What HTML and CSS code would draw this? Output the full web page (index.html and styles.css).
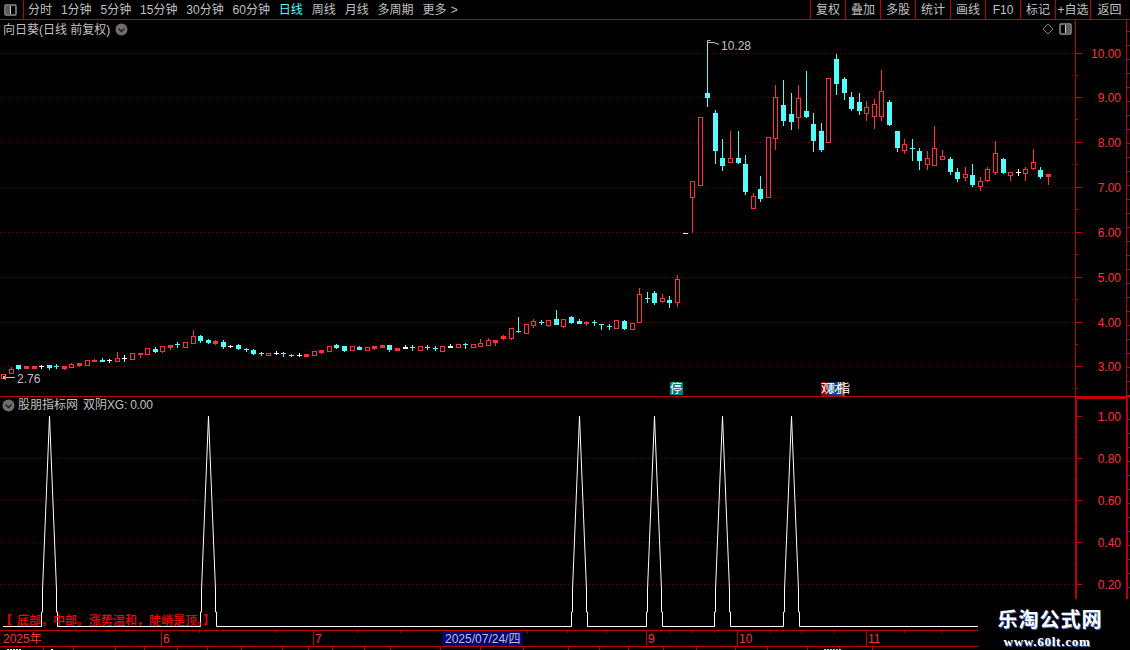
FILE: index.html
```html
<!DOCTYPE html>
<html lang="zh">
<head>
<meta charset="utf-8">
<title>向日葵 日线</title>
<link rel="stylesheet" href="styles.css">
</head>
<body>
<div class="app">
  <header class="toolbar">
    <div class="toggle">
      <svg class="panel-icon" width="13" height="12" viewBox="0 0 13 12"><rect x="1" y="1" width="11" height="10" rx="1" class="pi-frame"/><rect x="2" y="2" width="4" height="8" class="pi-fill"/><rect x="6" y="2" width="1" height="8" class="pi-div"/></svg>
    </div>
    <nav class="periods">
      <span>分时</span><span>1分钟</span><span>5分钟</span><span>15分钟</span><span>30分钟</span><span>60分钟</span><span class="active">日线</span><span>周线</span><span>月线</span><span>多周期</span><span>更多 <i class="more">&gt;</i></span>
    </nav>
    <nav class="actions">
      <span>复权</span><span>叠加</span><span>多股</span><span>统计</span><span>画线</span><span>F10</span><span>标记</span><span>+自选</span><span class="last">返回</span>
    </nav>
  </header>

  <section class="upper">
    <div class="panel-title">
      <span>向日葵(日线 前复权)</span>
      <svg class="chev" width="13" height="13" viewBox="0 0 13 13"><circle cx="6.5" cy="6.5" r="6" class="chev-bg"/><path d="M3.5 5.5 L6.5 8.5 L9.5 5.5" class="chev-mark"/></svg>
    </div>
    <div class="panel-tools">
      <svg width="12" height="12" viewBox="0 0 12 12"><path d="M6 1 L11 6 L6 11 L1 6 Z" class="diamond"/></svg>
      <svg width="13" height="12" viewBox="0 0 13 12"><rect x="1" y="1" width="11" height="10" rx="1" class="pi-frame"/><rect x="7" y="2" width="4" height="8" class="pi-fill"/><rect x="6" y="2" width="1" height="8" class="pi-div"/></svg>
    </div>
    <svg id="upper" class="chart" width="1130" height="376" viewBox="0 20 1130 376"></svg>
  </section>

  <section class="lower">
    <div class="panel-title lower-title">
      <svg class="chev" width="13" height="13" viewBox="0 0 13 13"><circle cx="6.5" cy="6.5" r="6" class="chev-bg"/><path d="M3.5 5.5 L6.5 8.5 L9.5 5.5" class="chev-mark"/></svg>
      <span class="t-name">股朋指标网</span><span class="t-ind">双阴</span><span class="t-val">XG: 0.00</span>
    </div>
    <svg id="lower" class="chart" width="1130" height="233" viewBox="0 397 1130 233"></svg>
    <div class="legend"><span class="lb">【</span>底部，中部。涨势温和，陡峭是顶。】</div>
  </section>

  <svg id="time" class="chart timebar" width="1130" height="16" viewBox="0 631 1130 16"></svg>
  <svg id="sliver" class="chart sliver" width="1130" height="3" viewBox="0 647 1130 3"></svg>

  <aside class="watermark">
    <div class="wm-cn">乐淘公式网</div>
    <div class="wm-url">www.60lt.com</div>
  </aside>
</div>
<script src="chart.js"></script>
</body>
</html>
```

FILE: styles.css
```css
* { box-sizing: border-box; }
html, body { margin: 0; padding: 0; background: #000; }
body { width: 1130px; height: 650px; overflow: hidden; }
.app {
  position: relative;
  width: 1130px;
  height: 650px;
  display: flex;
  flex-direction: column;
  overflow: hidden;
  background: #000;
  color: #c0c0c0;
  font: 12px/1 "Liberation Sans", "Noto Sans CJK SC", sans-serif;
}

/* toolbar */
.toolbar {
  display: flex;
  align-items: stretch;
  height: 20px;
  flex: none;
  border-bottom: 1px solid #c00000;
}
.toggle {
  width: 24px;
  display: flex;
  align-items: center;
  padding-left: 4px;
  border-right: 1px solid #c00000;
}
.panel-icon { display: block; }
.pi-frame { fill: #000; stroke: #909090; stroke-width: 1.5; }
.pi-fill { fill: #5c5c5c; }
.pi-div { fill: #c8c8c8; }
.periods {
  display: flex;
  align-items: center;
  gap: 8.9px;
  padding-left: 4px;
  white-space: nowrap;
}
.periods .active { color: #54fcfc; }
.more { font-style: normal; margin-left: 1px; }
.actions {
  display: flex;
  margin-left: auto;
  margin-right: 2px;
}
.actions span {
  width: 35px;
  display: flex;
  align-items: center;
  justify-content: center;
  border-left: 1px solid #c00000;
  white-space: nowrap;
}
.actions .last { width: 38px; }

/* panels */
.upper { position: relative; height: 377px; flex: none; border-bottom: 1px solid #c00000; }
.lower { position: relative; height: 234px; flex: none; border-bottom: 1px solid #c00000; }
.chart { display: block; }
.panel-title {
  position: absolute;
  left: 3px;
  top: 1px;
  height: 17px;
  display: flex;
  align-items: center;
  gap: 5px;
  white-space: nowrap;
}
.lower-title { top: 0; left: 2px; height: 16px; gap: 0; }
.t-name { margin-left: 3px; }
.t-ind { margin-left: 5px; }
.t-val { letter-spacing: -.2px; }
.chev { display: block; flex: none; }
.chev-bg { fill: #6e6e6e; }
.chev-mark { fill: none; stroke: #1c1c1c; stroke-width: 1.4; }
.panel-tools {
  position: absolute;
  left: 1042px;
  top: 3px;
  display: flex;
  align-items: center;
  gap: 5px;
}
.panel-tools svg { display: block; }
.diamond { fill: none; stroke: #808080; }
.legend {
  position: absolute;
  left: 0;
  top: 217px;
  color: #f80000;
  font-weight: 500;
  white-space: nowrap;
  line-height: 14px;
}
.lb { margin-right: 5px; }

/* svg parts */
.red { fill: #ff3232; }
.cyan { fill: #54fcfc; }
.white { fill: #fff; }
.line { fill: #c00000; }
.grid { fill: #800000; }
.axis-text { fill: #ff3232; font: 12px "Liberation Sans", "Noto Sans CJK SC", sans-serif; }
.end { text-anchor: end; }
.note { fill: #c0c0c0; font: 12px "Liberation Sans", sans-serif; }
.note-line { fill: none; stroke: #c0c0c0; stroke-width: 1; }
.peak { fill: none; stroke: #fff; stroke-width: 1; }
.sig { fill: #fff; font: 12px "Noto Sans CJK SC", sans-serif; }
.sig-teal { fill: #008080; }
.sig-red { fill: #900000; }
.sig-blue { fill: #004080; }
.sig-brown { fill: #a05000; }
.date-box { fill: #00007c; stroke: #0000c0; }
.date-text { fill: #c0c0c0; font: 12px "Liberation Sans", "Noto Sans CJK SC", sans-serif; }

/* watermark */
.watermark {
  position: absolute;
  left: 978px;
  top: 600px;
  width: 152px;
  height: 50px;
  background: #000;
  color: #fff;
  text-align: center;
  padding-top: 8px;
}
.wm-cn {
  font: 700 20px/22px "Noto Sans CJK SC", sans-serif;
  letter-spacing: 1px;
  margin-left: -8px;
  text-shadow: 1px 1px 0 #3a6ac8;
}
.wm-url {
  font: 700 13px/15px "Liberation Serif", serif;
  letter-spacing: .75px;
  margin-top: 4px;
  margin-left: -14px;
  text-shadow: 1px 1px 0 #3a6ac8;
}
```

FILE: chart.js
```js
// [x, bodyTop, bodyBottom, high, low, kind]  r hollow red, f solid red, c cyan, w white
var candles = [
[3,374,378,374,378,'r'],[11,369,373,367,373,'r'],[18,365,368,365,369,'c'],[26,366,368,366,368,'f'],[34,366,368,366,368,'f'],
[41,366,366,365,368,'w'],[49,365,367,365,369,'c'],[56,366,366,364,368,'c'],[64,366,368,366,369,'f'],[71,364,367,363,367,'r'],
[79,363,365,363,366,'f'],[87,360,365,360,365,'r'],[94,360,361,359,361,'f'],[102,360,361,358,361,'c'],[109,360,360,359,362,'w'],
[117,358,361,352,361,'r'],[124,358,358,355,361,'w'],[132,353,359,353,359,'r'],[140,353,354,353,357,'f'],[147,348,354,348,354,'r'],
[155,349,351,347,352,'c'],[162,346,351,346,352,'r'],[170,345,347,345,349,'f'],[177,344,344,342,347,'c'],[185,342,347,342,347,'r'],
[193,336,343,330,343,'r'],[200,336,340,335,342,'c'],[208,340,342,339,343,'c'],[215,341,343,340,344,'f'],[223,342,346,340,348,'c'],
[230,346,346,345,347,'w'],[238,345,348,344,349,'c'],[246,349,349,348,351,'c'],[253,350,353,349,354,'c'],[261,353,353,352,355,'c'],
[268,353,355,353,355,'r'],[276,353,353,351,354,'w'],[283,353,353,352,356,'c'],[291,355,355,354,356,'c'],[299,355,355,353,356,'w'],
[306,354,356,354,356,'f'],[314,351,355,351,355,'r'],[321,350,352,350,353,'f'],[329,346,351,346,351,'r'],[336,345,347,344,348,'c'],
[344,346,350,346,351,'c'],[352,346,350,346,350,'r'],[359,347,349,346,349,'c'],[367,347,350,347,350,'r'],[374,346,348,346,349,'f'],
[382,345,347,345,347,'f'],[389,345,349,345,351,'c'],[397,348,350,348,350,'f'],[405,347,348,345,348,'w'],[412,347,347,345,350,'c'],
[420,346,350,346,350,'r'],[427,347,347,345,349,'c'],[435,348,348,346,350,'c'],[442,346,351,346,351,'r'],[450,346,347,344,347,'w'],
[458,344,347,344,347,'r'],[465,344,344,343,348,'c'],[473,344,347,344,347,'r'],[480,343,346,339,346,'r'],[488,340,345,338,345,'r'],
[495,340,342,340,345,'f'],[503,336,338,335,339,'f'],[511,328,338,328,339,'r'],[518,331,331,317,332,'c'],[526,324,333,324,333,'r'],
[533,321,325,319,327,'r'],[541,322,322,320,324,'c'],[548,320,325,320,326,'r'],[556,319,324,310,324,'c'],[563,319,326,319,327,'r'],
[571,317,322,316,323,'c'],[579,321,323,319,323,'c'],[586,322,323,321,325,'f'],[594,322,322,320,325,'c'],[601,324,324,324,329,'c'],
[609,326,326,324,329,'c'],[616,320,328,320,328,'r'],[624,321,328,320,329,'c'],[632,323,329,323,329,'r'],[639,294,322,288,322,'r'],
[647,298,298,292,302,'c'],[654,293,302,291,304,'c'],[662,298,301,294,302,'r'],[669,300,302,296,307,'c'],[677,279,302,275,306,'r'],
[685,233,233,233,233,'w'],[692,181,197,181,232,'r'],[700,117,185,117,185,'r'],[707,93,97,43,106,'c'],[715,113,150,110,163,'c'],
[722,158,165,139,170,'c'],[730,158,162,131,162,'r'],[738,158,162,131,163,'c'],[745,164,191,155,194,'c'],[753,196,208,193,208,'r'],
[760,189,198,176,201,'c'],[768,137,197,137,197,'r'],[775,97,138,85,149,'r'],[783,105,120,80,125,'c'],[791,114,121,93,129,'c'],
[798,98,117,85,128,'r'],[806,111,116,71,117,'c'],[813,124,140,113,151,'c'],[821,131,149,123,151,'c'],[828,78,142,78,142,'r'],
[836,59,83,54,94,'c'],[844,79,92,77,99,'c'],[851,97,108,92,110,'c'],[859,102,110,93,114,'c'],[866,107,113,101,120,'r'],
[874,104,116,99,128,'r'],[881,91,116,70,120,'r'],[889,102,124,100,125,'c'],[897,131,147,131,151,'c'],[904,144,150,139,153,'r'],
[912,148,148,139,160,'c'],[919,151,160,148,169,'c'],[927,158,164,151,169,'r'],[934,148,165,126,165,'r'],[942,156,159,150,159,'r'],
[950,159,171,157,174,'c'],[957,172,178,168,181,'c'],[965,174,177,167,180,'r'],[972,175,184,164,186,'c'],[980,181,186,177,190,'r'],
[987,169,180,167,181,'r'],[995,153,172,141,174,'r'],[1003,159,172,158,173,'c'],[1010,172,175,172,180,'r'],[1018,172,172,169,175,'w'],
[1025,169,173,167,180,'r'],[1033,162,168,149,169,'r'],[1040,170,176,167,178,'c'],[1048,174,176,174,184,'f']
];

function rect(x, y, w, h, cls) {
  return '<rect x="' + x + '" y="' + y + '" width="' + w + '" height="' + h + '" class="' + cls + '"/>';
}
function text(x, y, s, cls) {
  return '<text x="' + x + '" y="' + y + '" class="' + cls + '">' + s + '</text>';
}
function gridLine(y, x2) {
  var d = '';
  for (var x = 0; x < x2; x += 4) d += 'M' + x + ' ' + y + 'h1v1h-1z';
  return '<path d="' + d + '" class="grid"/>';
}
function setSvg(id, html) {
  var el = document.getElementById(id);
  el.setAttribute('shape-rendering', 'crispEdges');
  el.innerHTML = html;
}
function candle(c) {
  var x = c[0], t = c[1], b = c[2], hi = c[3], lo = c[4], k = c[5];
  var cls = { r: 'red', f: 'red', c: 'cyan', w: 'white' }[k];
  var s = '';
  if (lo > hi) s += rect(x, hi, 1, lo - hi + 1, cls);
  if (b === t) return s + rect(x - 2, t, 5, 1, cls);
  if (k === 'r') {
    s += '<rect x="' + (x - 1) + '" y="' + (t + 1) + '" width="3" height="' + (b - t - 1) + '" fill="#000"/>';
    s += rect(x - 2, t, 5, 1, cls) + rect(x - 2, b, 5, 1, cls);
    s += rect(x - 2, t, 1, b - t, cls) + rect(x + 2, t, 1, b - t, cls);
    return s;
  }
  return s + rect(x - 2, t, 5, b - t + 1, cls);
}

/* upper panel */
var up = '';
[53, 97, 142, 187, 232, 277, 322, 366].forEach(function (y) { up += gridLine(y, 1075); });
candles.forEach(function (c) { up += candle(c); });
up += rect(1075, 20, 1, 376, 'line') + rect(1126, 20, 1, 376, 'line');
[['10.00', 53], ['9.00', 97], ['8.00', 142], ['7.00', 187], ['6.00', 232], ['5.00', 277], ['4.00', 322], ['3.00', 366]].forEach(function (a) {
  up += rect(1075, a[1], 7, 1, 'line');
  up += rect(1075, a[1] + 22, 3, 1, 'line');
  up += text(1121, a[1] + 5, a[0], 'axis-text end');
});
for (var yu = 31; yu < 396; yu += 14) up += rect(1126, yu, 4, 1, 'line');
up += '<path d="M707.5 43 V40.5 H710.5 M708 42.5 H711 L714 42.5 L719 44.5" class="note-line" shape-rendering="auto"/>';
up += text(721, 50, '10.28', 'note');
up += '<path d="M15 377.5 H3 M3 377.5 L6 375 M3 377.5 L6 380" class="note-line"/>';
up += text(17, 383, '2.76', 'note');
up += rect(670, 382, 13, 13, 'sig-teal') + text(670, 393, '停', 'sig');
up += rect(821, 382, 7, 14, 'sig-red') + rect(828, 382, 14, 14, 'sig-blue') + rect(842, 382, 3, 14, 'sig-brown');
up += text(821, 393, '观', 'sig') + text(829, 393, '财', 'sig') + text(838, 393, '指', 'sig');
setSvg('upper', up);

/* lower panel */
var low = '';
[458, 500, 542, 584].forEach(function (y) { low += gridLine(y, 1075); });
var base = 626, peaks = [49, 208, 579, 654, 722, 791];
var peakPath = 'M3 ' + (base + 0.5);
peaks.forEach(function (p) {
  peakPath += ' H' + (p - 8 + 0.5) + ' V612 H' + (p - 7 + 0.5) + ' V590 L' + (p + 0.5) + ' 416 L' + (p + 7.5) + ' 590 V612 H' + (p + 8.5) + ' V' + (base + 0.5);
});
peakPath += ' H978';
low += '<path d="' + peakPath + '" class="peak" shape-rendering="auto"/>';
low += rect(1075, 397, 53, 2, 'line');
low += rect(1075, 397, 2, 202, 'line') + rect(1126, 397, 2, 202, 'line');
[['1.00', 416], ['0.80', 458], ['0.60', 500], ['0.40', 542], ['0.20', 584]].forEach(function (a) {
  low += rect(1075, a[1], 7, 1, 'line');
  low += rect(1075, a[1] + 21, 3, 1, 'line');
  low += text(1121, a[1] + 5, a[0], 'axis-text end');
});
for (var yl = 419; yl < 599; yl += 14) low += rect(1128, yl, 2, 1, 'line');
setSvg('lower', low);

/* time axis */
var tm = '';
[199, 275, 357, 400, 527, 567, 606, 669, 692, 714, 770, 801, 834, 904, 941].forEach(function (x) { tm += rect(x, 631, 1, 2, 'line'); });
[161, 313, 646, 737, 866].forEach(function (x) { tm += rect(x, 631, 1, 15, 'line'); });
tm += text(3, 643, '2025年', 'axis-text');
tm += text(163, 643, '6', 'axis-text');
tm += text(315, 643, '7', 'axis-text');
tm += text(648, 643, '9', 'axis-text');
tm += text(739, 643, '10', 'axis-text');
tm += text(868, 643, '11', 'axis-text');
tm += rect(0, 646, 1130, 1, 'line');
tm += '<rect x="443.5" y="631.5" width="78" height="14" class="date-box"/>';
tm += text(445, 643, '2025/07/24/四', 'date-text');
setSvg('time', tm);

/* clipped status row: only the top pixels of its content are visible */
var sl = '';
[43, 73, 115, 144, 177, 207, 241, 282, 308, 332, 364, 390, 440, 480, 523, 568, 599, 628, 663, 696, 735, 767, 807, 839, 872].forEach(function (x) { sl += rect(x, 647, 1, 3, 'line'); });
[7, 10, 13, 16, 19, 51].forEach(function (x) { sl += rect(x, 649, 2, 1, 'white'); });
[824, 827, 830, 833, 836, 839].forEach(function (x) { sl += rect(x, 649, 2, 1, 'cyan'); });
setSvg('sliver', sl);
```
